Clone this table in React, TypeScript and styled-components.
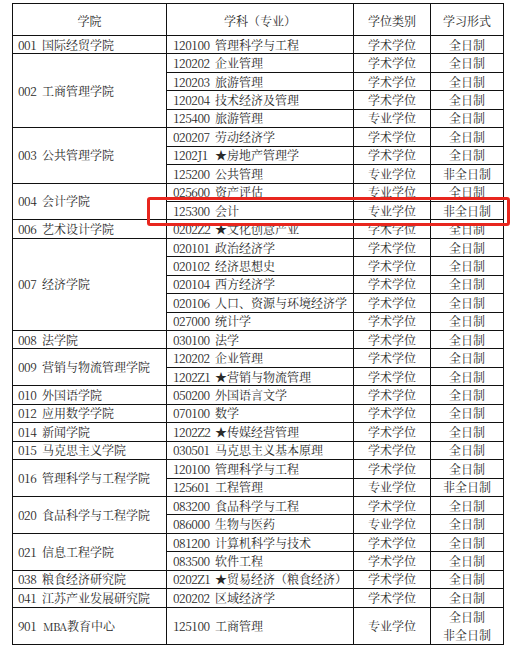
import React from "react";
import styled, { createGlobalStyle } from "styled-components";

const Global = createGlobalStyle`
  html, body { margin: 0; padding: 0; background: #ffffff; }
  body { font-family: "Noto Serif CJK SC", "Noto Sans CJK SC", serif; }
`;

const Page = styled.div`
  position: relative;
  width: 512px;
  height: 650px;
  padding: 3px 0 0 12px;
  box-sizing: border-box;
  background: #fff;
`;

const Table = styled.table`
  border-collapse: collapse;
  table-layout: fixed;
  width: 491px;
  font-size: 12px;
  color: #2a2a2a;
  font-family: "Noto Serif CJK SC", "Noto Sans CJK SC", serif;
`;

const Col = styled.col<{ $w: number }>`
  width: ${(p) => p.$w}px;
`;

const HeadCell = styled.th`
  border: 1px solid #111;
  height: 32px;
  padding: 3px 0 0;
  box-sizing: border-box;
  font-weight: normal;
  text-align: center;
  vertical-align: middle;
  line-height: 14px;
`;

const Row = styled.tr<{ $tall?: boolean }>`
  height: ${(p) => (p.$tall ? 36.9 : 18.45)}px;
`;

const Cell = styled.td<{ $align?: "left" | "center"; $pad?: number }>`
  border: 1px solid #111;
  padding: 0 0 0 ${(p) => p.$pad ?? 0}px;
  text-align: ${(p) => p.$align ?? "center"};
  vertical-align: middle;
  line-height: 16px;
  white-space: nowrap;
  overflow: hidden;
`;

const Code = styled.span<{ $w: number }>`
  display: inline-block;
  width: ${(p) => p.$w}px;
  letter-spacing: -0.5px;
`;

const Latin = styled.span`
  display: inline-block;
  width: 21px;
  font-size: 11px;
  letter-spacing: -0.8px;
`;

const Lines = styled.div`
  line-height: 18px;
`;

const Highlight = styled.div`
  position: absolute;
  left: 147px;
  top: 197px;
  width: 363px;
  height: 29px;
  box-sizing: border-box;
  border: 3px solid #e8261e;
  border-radius: 3px;
  pointer-events: none;
`;

type Sub = [string, string, string, string];
type Group = { code: string; name: string; subs: Sub[] };

const A = "学术学位";
const P = "专业学位";
const F = "全日制";
const N = "非全日制";

const groups: Group[] = [
  { code: "001", name: "国际经贸学院", subs: [["120100", "管理科学与工程", A, F]] },
  {
    code: "002",
    name: "工商管理学院",
    subs: [
      ["120202", "企业管理", A, F],
      ["120203", "旅游管理", A, F],
      ["120204", "技术经济及管理", A, F],
      ["125400", "旅游管理", P, F],
    ],
  },
  {
    code: "003",
    name: "公共管理学院",
    subs: [
      ["020207", "劳动经济学", A, F],
      ["1202J1", "★房地产管理学", A, F],
      ["125200", "公共管理", P, N],
    ],
  },
  {
    code: "004",
    name: "会计学院",
    subs: [
      ["025600", "资产评估", P, F],
      ["125300", "会计", P, N],
    ],
  },
  { code: "006", name: "艺术设计学院", subs: [["0202Z2", "★文化创意产业", A, F]] },
  {
    code: "007",
    name: "经济学院",
    subs: [
      ["020101", "政治经济学", A, F],
      ["020102", "经济思想史", A, F],
      ["020104", "西方经济学", A, F],
      ["020106", "人口、资源与环境经济学", A, F],
      ["027000", "统计学", A, F],
    ],
  },
  { code: "008", name: "法学院", subs: [["030100", "法学", A, F]] },
  {
    code: "009",
    name: "营销与物流管理学院",
    subs: [
      ["120202", "企业管理", A, F],
      ["1202Z1", "★营销与物流管理", A, F],
    ],
  },
  { code: "010", name: "外国语学院", subs: [["050200", "外国语言文学", A, F]] },
  { code: "012", name: "应用数学学院", subs: [["070100", "数学", A, F]] },
  { code: "014", name: "新闻学院", subs: [["1202Z2", "★传媒经营管理", A, F]] },
  { code: "015", name: "马克思主义学院", subs: [["030501", "马克思主义基本原理", A, F]] },
  {
    code: "016",
    name: "管理科学与工程学院",
    subs: [
      ["120100", "管理科学与工程", A, F],
      ["125601", "工程管理", P, N],
    ],
  },
  {
    code: "020",
    name: "食品科学与工程学院",
    subs: [
      ["083200", "食品科学与工程", A, F],
      ["086000", "生物与医药", P, F],
    ],
  },
  {
    code: "021",
    name: "信息工程学院",
    subs: [
      ["081200", "计算机科学与技术", A, F],
      ["083500", "软件工程", A, F],
    ],
  },
  { code: "038", name: "粮食经济研究院", subs: [["0202Z1", "★贸易经济（粮食经济）", A, F]] },
  { code: "041", name: "江苏产业发展研究院", subs: [["020202", "区域经济学", A, F]] },
];

export default function App() {
  return (
    <>
      <Global />
      <Page>
        <Table>
          <colgroup>
            <Col $w={154} />
            <Col $w={187} />
            <Col $w={77} />
            <Col $w={73} />
          </colgroup>
          <thead>
            <tr>
              <HeadCell>学院</HeadCell>
              <HeadCell>学科（专业）</HeadCell>
              <HeadCell>学位类别</HeadCell>
              <HeadCell>学习形式</HeadCell>
            </tr>
          </thead>
          <tbody>
            {groups.map((g) =>
              g.subs.map((s, i) => (
                <Row key={g.code + s[0] + i}>
                  {i === 0 && (
                    <Cell rowSpan={g.subs.length} $align="left" $pad={5}>
                      <Code $w={24}>{g.code}</Code>
                      {g.name}
                    </Cell>
                  )}
                  <Cell $align="left" $pad={6}>
                    <Code $w={42}>{s[0]}</Code>
                    {s[1]}
                  </Cell>
                  <Cell>{s[2]}</Cell>
                  <Cell>{s[3]}</Cell>
                </Row>
              ))
            )}
            <Row $tall>
              <Cell $align="left" $pad={5}>
                <Code $w={25}>901</Code>
                <Latin>MBA</Latin> 教育中心
              </Cell>
              <Cell $align="left" $pad={6}>
                <Code $w={42}>125100</Code>
                工商管理
              </Cell>
              <Cell>{P}</Cell>
              <Cell>
                <Lines>
                  {F}
                  <br />
                  {N}
                </Lines>
              </Cell>
            </Row>
          </tbody>
        </Table>
        <Highlight />
      </Page>
    </>
  );
}
